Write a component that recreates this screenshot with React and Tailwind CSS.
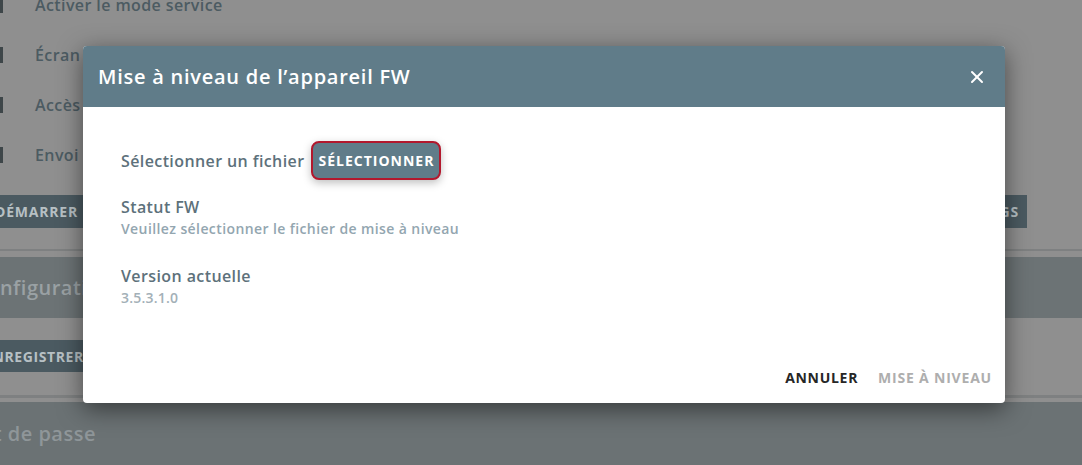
import { X } from "lucide-react";

const font = { fontFamily: '"Open Sans", "Liberation Sans", sans-serif' };

function Row({ label }) {
    return (
        <div className="h-[50px] flex items-center gap-[32px]">
            <div className="w-[3px] h-[16px] bg-[#3e4649]" />
            <span className="text-[16px] font-semibold tracking-[0.4px] text-[#4c5b62]">{label}</span>
        </div>
    );
}

function Modal() {
    return (
        <div className="absolute left-[83px] top-[46px] w-[922px] h-[357px] bg-white rounded-[4px] overflow-hidden flex flex-col shadow-[0_6px_24px_rgba(0,0,0,0.5)]">
            <div className="h-[61px] bg-[#607c89] flex items-center justify-between pl-[15px] pr-[18px]">
                <h2 className="text-[20px] font-semibold text-white tracking-[0.75px]">
                    Mise à niveau de l’appareil FW
                </h2>
                <X className="w-[20px] h-[20px] text-white" strokeWidth={2.4} />
            </div>

            <div className="flex-1 pl-[38px] pt-[34px]">
                <div className="flex items-center gap-[7px]">
                    <span className="text-[16px] font-semibold tracking-[0.4px] text-[#5d717b]">Sélectionner un fichier</span>
                    <button className="h-[39px] px-[5px] bg-[#607c89] border-2 border-[#b3182d] rounded-[8px] text-[14px] font-bold tracking-[1px] text-white shadow-[0_3px_8px_rgba(0,0,0,0.25)]">
                        SÉLECTIONNER
                    </button>
                </div>

                <div className="mt-[17px] leading-[21px]">
                    <div className="text-[16px] font-semibold tracking-[0.4px] text-[#5d717b]">Statut FW</div>
                    <div className="text-[14px] font-semibold tracking-[0.4px] text-[#93a6b0]">
                        Veuillez sélectionner le fichier de mise à niveau
                    </div>
                </div>

                <div className="mt-[27px] leading-[21px]">
                    <div className="text-[16px] font-semibold tracking-[0.4px] text-[#5d717b]">Version actuelle</div>
                    <div className="text-[14px] font-semibold tracking-[0.2px] text-[#a3b0b7]">3.5.3.1.0</div>
                </div>
            </div>

            <div className="flex justify-end items-center gap-[20px] pr-[13px] pb-[15px]">
                <span className="text-[14px] font-bold tracking-[0.7px] text-[#262626]">ANNULER</span>
                <span className="text-[14px] font-bold tracking-[0.8px] text-[#aeaeae]">MISE À NIVEAU</span>
            </div>
        </div>
    );
}

export default function App() {
    return (
        <div className="relative w-[1082px] h-[465px] overflow-hidden bg-[#8f8f8f]" style={font}>
            <div className="-mt-[20px]">
                <Row label="Activer le mode service" />
                <Row label="Écran" />
                <Row label="Accès" />
                <Row label="Envoi" />
            </div>

            <div className="mt-[15px] flex justify-between pr-[55px]">
                <div className="-ml-[17px] h-[33px] px-[12px] bg-[#4b5a61] flex items-center text-[14px] font-bold tracking-[0.8px] text-[#b7c0c4]">
                    DÉMARRER
                </div>
                <div className="h-[33px] px-[8px] bg-[#4b5a61] flex items-center text-[14px] font-bold tracking-[0.8px] text-[#b7c0c4]">
                    LOGS
                </div>
            </div>

            <div className="mt-[21px] h-[2px] bg-[#7e8081]" />
            <div className="mt-[6px] h-[61px] bg-[#6c7375] flex items-center -ml-[26px] text-[20px] font-semibold tracking-[0.5px] text-[#9aa1a4]">
                Configuration
            </div>

            <div className="mt-[22px] -ml-[28px] w-fit h-[32px] px-[12px] bg-[#4b5a61] flex items-center text-[14px] font-bold tracking-[0.6px] text-[#b7c0c4]">
                ENREGISTRER
            </div>

            <div className="mt-[23px] h-[3px] bg-[#7e8081]" />
            <div className="mt-[4px] h-[63px] bg-[#6b7274] flex items-center -ml-[38px] text-[20px] font-semibold tracking-[0.5px] text-[#8f9699]">
                Mot de passe
            </div>

            <Modal />
        </div>
    );
}
